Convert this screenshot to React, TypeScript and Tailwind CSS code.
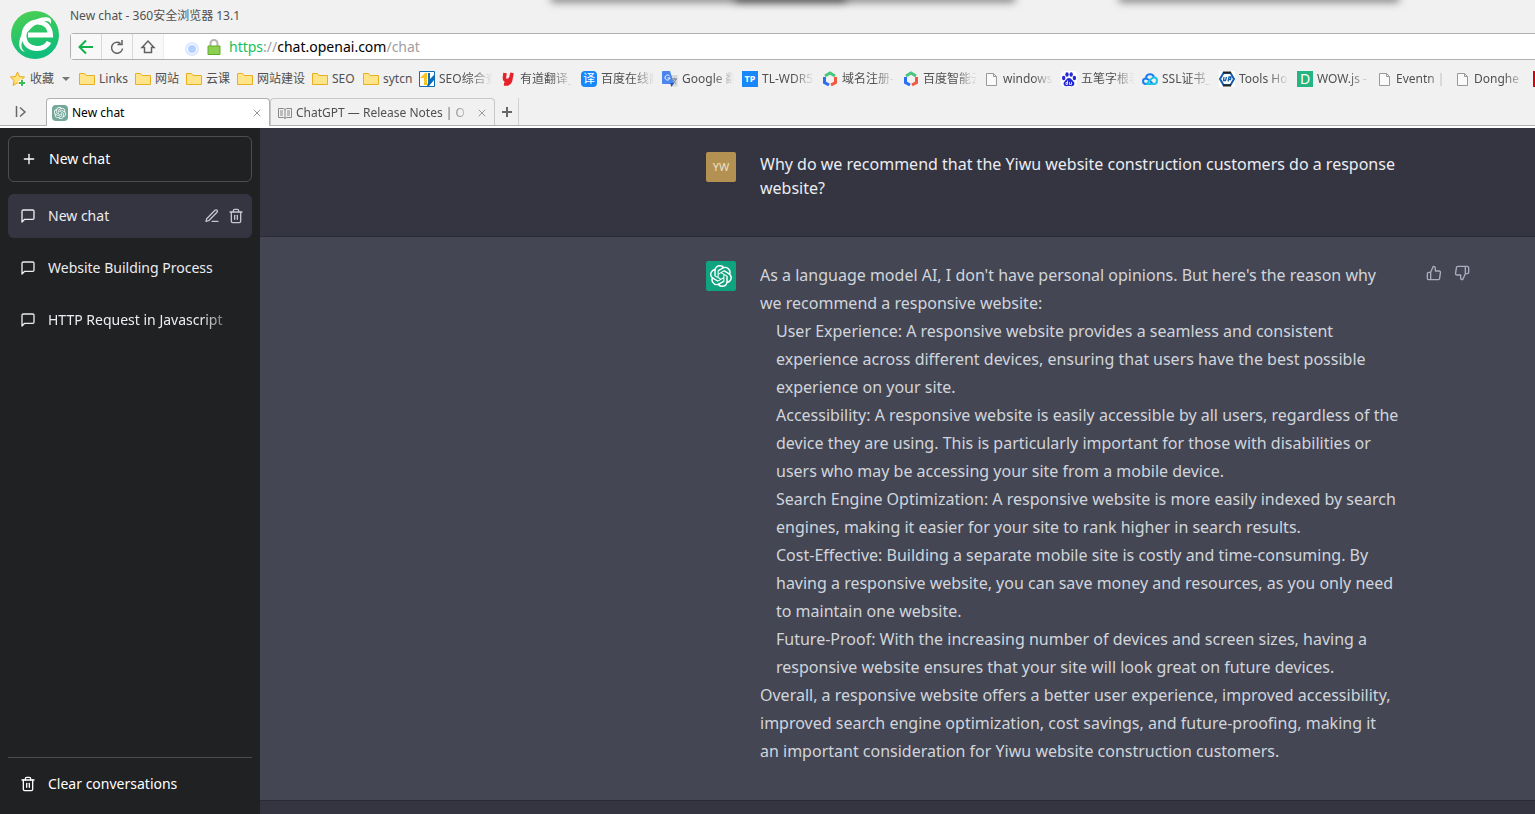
import { FC, ReactNode } from "react";
import {
  FiEdit3,
  FiMessageSquare,
  FiPlus,
  FiThumbsDown,
  FiThumbsUp,
  FiTrash2,
  FiX,
} from "react-icons/fi";
import { SiOpenai } from "react-icons/si";

const BrowserLogo: FC = () => (
  <svg viewBox="0 0 48 48" className="h-12 w-12">
    <defs>
      <linearGradient id="logoGreen" x1="0" y1="0" x2="0.3" y2="1">
        <stop offset="0" stopColor="#4fd04f" />
        <stop offset="1" stopColor="#0fbd7c" />
      </linearGradient>
    </defs>
    <circle cx="24" cy="24" r="24" fill="url(#logoGreen)" />
    <path
      d="M17 24h22.500C39 16 34 11 26.500 11 18.500 11 13 17 13 25c0 7.500 5.500 12.500 13 12.500 6 0 10-2.500 12-6.500"
      fill="none"
      stroke="#fff"
      strokeWidth="5"
    />
    <path d="M13 27c-4 6-3 11 1 14-6-1-8-9-3-18C16 13 27 5 37 6.500c3 .5 4 3.500 2.500 6.500C39 10.500 37 9.500 34 10 26 11 17 18 13 27z" fill="#fff" />
  </svg>
);

const FolderIcon: FC = () => (
  <svg viewBox="0 0 16 16" className="h-4 w-4">
    <path d="M.5 13.500v-11h5l1.500 2h8.500v9z" fill="#ffe48a" stroke="#e8b021" />
  </svg>
);

const PageIcon: FC = () => (
  <svg viewBox="0 0 14 16" className="h-4 w-[14px]">
    <path d="M1.500 2.500h7l3 3v9h-10zM8.500 2.500v3h3" fill="#fafafa" stroke="#999" />
  </svg>
);

const StarIcon: FC = () => (
  <svg viewBox="0 0 16 16" className="h-4 w-4">
    <path d="M7.500 1l2 4.500 5 .5-3.700 3.400 1 5-4.300-2.600-4.400 2.600 1-5L.5 6l5-.5z" fill="#ffe27a" stroke="#e8a91c" />
    <path d="M12 8.500v7M8.500 12h7" stroke="#fff" strokeWidth="4" />
    <path d="M12 9v6M9 12h6" stroke="#3dbb57" strokeWidth="2" />
  </svg>
);

const SeoIcon: FC = () => (
  <svg viewBox="0 0 16 16" className="h-4 w-4">
    <path d="M.5.5h15v15H.5z" fill="#fff" stroke="#0b6cb8" />
    <path d="M1 7l5-5h2v6l-3 3V7z" fill="#f7c51e" />
    <path d="M5 11l3-3v6H5z" fill="#f7c51e" />
    <path d="M9 2h2v6l4-4v5l-5 6H8l1-3z" fill="#0b6cb8" />
  </svg>
);

const YoudaoIcon: FC = () => (
  <svg viewBox="0 0 16 16" className="h-4 w-4">
    <path d="M5 2L4.500 6Q4 9.500 7 9.500T11 6l1-4-1.500 8q-1 3.500-6.500 3" fill="none" stroke="#e62129" strokeWidth="3.500" />
  </svg>
);

const GoogleTranslateIcon: FC = () => (
  <svg viewBox="0 0 16 16" className="h-4 w-4">
    <path d="M6 4h9.500v11.500H9z" fill="#d5d8dc" />
    <path d="M1 0h7l4 13H1q-1 0-1-1V1q0-1 1-1z" fill="#4a86ee" />
    <path d="M8 12h4l-2.500 4z" fill="#2f56b0" />
    <path d="M7.500 5A2.500 2.500 0 1 0 8 7H5.500" fill="none" stroke="#fff" />
    <path d="M10 8h5M12.500 7v1M14 8q-1 3-3 4M11 9q1 2 3 3.500" fill="none" stroke="#6f7f95" />
  </svg>
);

const CloudHexIcon: FC = () => (
  <svg viewBox="0 0 16 16" className="h-4 w-4">
    <path d="M3 5l5-3 5 3" fill="none" stroke="#4cc57c" strokeWidth="3" />
    <path d="M2.500 6v5.500L7 14" fill="none" stroke="#2d6df6" strokeWidth="3" />
    <path d="M13.500 6v5.500L9 14" fill="none" stroke="#f2593f" strokeWidth="3" />
  </svg>
);

const PawIcon: FC = () => (
  <svg viewBox="0 0 16 16" className="h-4 w-4 rounded-sm bg-white">
    <g fill="#2529d8">
      <ellipse cx="2.700" cy="7" rx="1.700" ry="2.200" />
      <ellipse cx="6" cy="3.500" rx="1.700" ry="2.300" />
      <ellipse cx="10.200" cy="3.500" rx="1.700" ry="2.300" />
      <ellipse cx="13.400" cy="7" rx="1.700" ry="2.200" />
      <path d="M8 7c2 0 3 2 4.500 3.500 2 2 .5 5-2 4.700-1.500-.4-3.500-.4-5 0-2.500.3-4-2.700-2-4.700C5 9 6 7 8 7z" />
    </g>
    <path d="M6.500 9.500v4H5v-2h1.500M8.500 11v2.500h2V11" fill="none" stroke="#fff" strokeWidth="0.800" />
  </svg>
);

const SslCloudIcon: FC = () => (
  <svg viewBox="0 0 16 16" className="h-4 w-4" fill="none" strokeWidth="2">
    <path d="M4 13c-4 0-4-5.500 0-5.500C4 2 11 2 12 6.500" stroke="#1c7cf2" />
    <path d="M4 7.500c2 0 4 2.500 6.500 5" stroke="#1c7cf2" />
    <path d="M4 13h8c4 0 4-6.500 0-6.500-2.500 0-4 3-7 6" stroke="#1fc3e8" />
  </svg>
);

const ToolsIcon: FC = () => (
  <svg viewBox="0 0 16 16" className="h-4 w-4 bg-white">
    <path d="M4.500 2h7L15 8l-3.500 6h-7L1 8z" fill="none" stroke="#155eae" strokeWidth="2" />
    <path d="M4 1.500h8M4 14.500h8" stroke="#222" strokeWidth="2" />
    <path d="M5 6l-.5 3.500h2L7.500 6M9 10.500L10 6h2l-.5 2.500h-2" fill="none" stroke="#155eae" strokeWidth="1.300" />
  </svg>
);

const Badge: FC<{ className: string; children: ReactNode }> = ({ className, children }) => (
  <span className={`flex h-4 w-4 items-center justify-center leading-4 text-white ${className}`}>
    {children}
  </span>
);

const bookmarks = [
  { label: "Links", icon: <FolderIcon />, width: "w-[56px]" },
  { label: "网站", icon: <FolderIcon />, width: "w-[51px]" },
  { label: "云课", icon: <FolderIcon />, width: "w-[51px]" },
  { label: "网站建设", icon: <FolderIcon />, width: "w-[75px]" },
  { label: "SEO", icon: <FolderIcon />, width: "w-[51px]" },
  { label: "sytcn", icon: <FolderIcon />, width: "w-[56px]" },
  { label: "SEO综合查", icon: <SeoIcon />, width: "w-[81px]", fade: true },
  { label: "有道翻译_", icon: <YoudaoIcon />, width: "w-[81px]", fade: true },
  {
    label: "百度在线翻",
    icon: <Badge className="rounded-sm bg-[#1787fb] text-xs">译</Badge>,
    width: "w-[81px]",
    fade: true,
  },
  { label: "Google 翻", icon: <GoogleTranslateIcon />, width: "w-[80px]", fade: true },
  {
    label: "TL-WDR5",
    icon: <Badge className="bg-[#1787fb] text-[9px] font-bold">TP</Badge>,
    width: "w-[80px]",
    fade: true,
  },
  { label: "域名注册-", icon: <CloudHexIcon />, width: "w-[81px]", fade: true },
  { label: "百度智能云", icon: <CloudHexIcon />, width: "w-[82px]", fade: true },
  { label: "windows", icon: <PageIcon />, width: "w-[76px]", fade: true },
  { label: "五笔字根表", icon: <PawIcon />, width: "w-[81px]", fade: true },
  { label: "SSL证书_", icon: <SslCloudIcon />, width: "w-[77px]", fade: true },
  { label: "Tools Ho", icon: <ToolsIcon />, width: "w-[78px]", fade: true },
  {
    label: "WOW.js -",
    icon: <Badge className="bg-[#25b580] text-sm">D</Badge>,
    width: "w-[81px]",
    fade: true,
  },
  { label: "Eventn |", icon: <PageIcon />, width: "w-[78px]", fade: true },
  { label: "Donghe |", icon: <PageIcon />, width: "w-[77px]", fade: true },
];

const chats = ["New chat", "Website Building Process", "HTTP Request in Javascript"];

const reasons = [
  "User Experience: A responsive website provides a seamless and consistent experience across different devices, ensuring that users have the best possible experience on your site.",
  "Accessibility: A responsive website is easily accessible by all users, regardless of the device they are using. This is particularly important for those with disabilities or users who may be accessing your site from a mobile device.",
  "Search Engine Optimization: A responsive website is more easily indexed by search engines, making it easier for your site to rank higher in search results.",
  "Cost-Effective: Building a separate mobile site is costly and time-consuming. By having a responsive website, you can save money and resources, as you only need to maintain one website.",
  "Future-Proof: With the increasing number of devices and screen sizes, having a responsive website ensures that your site will look great on future devices.",
];

const BrowserChrome: FC = () => (
  <header className="relative overflow-hidden bg-[#f1f1f1] text-xs text-[#505050]">
    {/* Shadows of the windows above */}
    <div className="absolute -top-1 left-[36%] h-1 w-[30%] shadow-[0_0_8px_2px_rgba(0,0,0,0.5)]" />
    <div className="absolute -top-1 left-[48%] h-1 w-[7%] shadow-[0_0_8px_2px_rgba(0,0,0,0.5)]" />
    <div className="absolute -top-1 left-[73%] h-1 w-[18%] shadow-[0_0_8px_2px_rgba(0,0,0,0.5)]" />

    {/* Title and address bar */}
    <div className="flex">
      <div className="px-[11px] pt-[11px]">
        <BrowserLogo />
      </div>
      <div className="min-w-0 flex-1">
        <div className="h-[33px] leading-8">New chat - 360安全浏览器 13.1</div>
        <div className="flex h-[27px] rounded-l-sm border border-r-0 border-[#b0b0b0] bg-white">
          <button aria-label="Back" className="flex w-[31px] items-center justify-center border-r border-[#d8d8d8] bg-[#f8f8f8]">
            <svg viewBox="0 0 16 16" className="h-4 w-4" fill="none" stroke="#12b24b" strokeWidth="2">
              <path d="M8 1.500L1.500 8 8 14.500M1.500 8H15" />
            </svg>
          </button>
          <button aria-label="Reload" className="flex w-[31px] items-center justify-center border-r border-[#d8d8d8] bg-[#f8f8f8]">
            <svg viewBox="0 0 16 16" className="h-4 w-4" fill="none" stroke="#606060" strokeWidth="1.500">
              <path d="M13.500 9.500A5.500 5.500 0 1 1 11.500 4.500M8.500 5.500h4.500V1" />
            </svg>
          </button>
          <button aria-label="Home" className="flex w-[31px] items-center justify-center border-r border-[#ececec] bg-[#f8f8f8]">
            <svg viewBox="0 0 16 16" className="h-4 w-4" fill="none" stroke="#606060" strokeWidth="1.500">
              <path d="M4.500 13.500V8.500H2L8 2l6 6.500h-2.500v5z" />
            </svg>
          </button>
          <div className="flex min-w-0 flex-1 items-center gap-2 pl-[21px]">
            <span className="mt-1 h-[14px] w-[14px] rounded-full border-2 border-[#dce8ff] bg-[#b5d0ff] bg-clip-content p-px" />
            <svg viewBox="0 0 14 16" className="h-4 w-[14px]">
              <path d="M3.500 8V4.500a3.500 3.500 0 0 1 7 0V8" fill="none" stroke="#b5b5b5" strokeWidth="2" />
              <path d="M1 7h12v8.500H1z" fill="#8ccf52" stroke="#5fae2a" />
            </svg>
            <div
              role="textbox"
              aria-label="Address"
              contentEditable
              suppressContentEditableWarning
              className="flex-1 text-sm leading-6 text-[#a0a0a0] outline-none"
            >
              <span className="text-[#12c25b]">https</span>://<span className="text-black">chat.openai.com</span>/chat
            </div>
          </div>
        </div>
      </div>
    </div>

    {/* Bookmarks */}
    <nav className="flex h-[38px] items-center overflow-hidden pl-[10px]">
      <button className="flex w-[69px] shrink-0 items-center gap-1 whitespace-nowrap">
        <StarIcon />
        收藏
        <span className="ml-1 border-x-4 border-t-4 border-x-transparent border-t-[#777]" />
      </button>
      {bookmarks.map((b) => (
        <a
          key={b.label}
          href="#"
          className={`flex shrink-0 items-center gap-1 pr-2 ${b.width}`}
        >
          <span className="shrink-0">{b.icon}</span>
          <span
            className={`flex-1 whitespace-nowrap ${
              b.fade
                ? "overflow-hidden [mask-image:linear-gradient(to_right,black_60%,transparent)]"
                : ""
            }`}
          >
            {b.label}
          </span>
        </a>
      ))}
      <span className="h-4 w-4 shrink-0 bg-[#d8000f]" />
    </nav>

    {/* Tabs */}
    <div className="flex h-7 border-b border-[#b0b0b0]">
      <button aria-label="Toggle tabs" className="flex w-[46px] shrink-0 items-center pl-[15px]">
        <svg viewBox="0 0 12 12" className="h-3 w-3" fill="none" stroke="#666" strokeWidth="1.500">
          <path d="M1.500 0v11M5 1.500l5 4.500-5 4.500" />
        </svg>
      </button>
      <div className="-mb-px flex w-[224px] items-center gap-1 rounded-t-sm border border-b-0 border-[#b0b0b0] bg-white pt-px pr-[6px] pl-[5px] text-black">
        <span className="flex h-4 w-4 items-center justify-center rounded-sm bg-[#74a89b]">
          <SiOpenai className="h-3 w-3 text-white" />
        </span>
        <span className="flex-1">New chat</span>
        <button aria-label="Close tab" className="text-[#999]">
          <FiX size={12} />
        </button>
      </div>
      <div className="flex w-[225px] items-center gap-1 rounded-t-sm border border-b-0 border-[#c8c8c8] pt-px pr-[6px] pl-[7px]">
        <svg viewBox="0 0 14 12" className="h-3 w-[14px]" fill="none" stroke="#888">
          <path d="M7 2v9.500M.5 1.500h5L7 2.500l1.500-1h5v9h-5l-1.500 1-1.500-1h-5zM2 4h3M2 6h3M2 8h3M9 4h3M9 6h3M9 8h3" />
        </svg>
        <span className="flex-1 overflow-hidden whitespace-nowrap [mask-image:linear-gradient(to_right,black_85%,transparent)]">
          ChatGPT — Release Notes | O
        </span>
        <button aria-label="Close tab" className="text-[#999]">
          <FiX size={12} />
        </button>
      </div>
      <button aria-label="New tab" className="flex w-6 items-center justify-center border-r border-[#d0d0d0]">
        <svg viewBox="0 0 12 12" className="h-3 w-3" stroke="#666" strokeWidth="2">
          <path d="M6 1v10M1 6h10" />
        </svg>
      </button>
    </div>
    <div className="h-[2px] bg-white" />
  </header>
);

const Sidebar: FC = () => (
  <aside className="flex w-[260px] shrink-0 flex-col bg-[#202123] p-2 text-sm leading-5 text-white">
    <button className="mb-3 flex h-[46px] items-center gap-3 rounded-md border border-white/20 px-3">
      <FiPlus size={16} />
      New chat
    </button>
    <nav className="flex flex-1 flex-col gap-2">
      {chats.map((chat, i) => (
        <div
          key={chat}
          className={`flex h-11 items-center gap-3 rounded-md px-3 text-[#ececf1] ${
            i === 0 ? "bg-[#343541]" : ""
          }`}
        >
          <FiMessageSquare size={16} className="shrink-0" />
          <a
            href="#"
            className={`flex-1 overflow-hidden whitespace-nowrap ${
              i === 2 ? "[mask-image:linear-gradient(to_right,black_80%,transparent)]" : ""
            }`}
          >
            {chat}
          </a>
          {i === 0 && (
            <div className="-mr-1 flex gap-2 text-[#c5c5d2]">
              <button aria-label="Rename chat">
                <FiEdit3 size={16} />
              </button>
              <button aria-label="Delete chat">
                <FiTrash2 size={16} />
              </button>
            </div>
          )}
        </div>
      ))}
    </nav>
    <div className="border-t border-white/20 pt-1">
      <button className="flex h-11 w-full items-center gap-3 px-3">
        <FiTrash2 size={16} />
        Clear conversations
      </button>
    </div>
  </aside>
);

const App: FC = () => {
  return (
    <div className="flex min-h-screen flex-col font-['Noto_Sans','Noto_Sans_CJK_SC',sans-serif]">
      <BrowserChrome />
      <div className="flex flex-1">
        <Sidebar />
        <main className="min-w-0 flex-1 bg-[#343541] text-base">
          {/* Question */}
          <section className="flex justify-end border-b border-[#2a2b32] py-6 pr-[61px]">
            <div className="flex w-full max-w-3xl gap-6">
              <div className="flex h-[30px] w-[30px] shrink-0 items-center justify-center rounded-xs bg-[#b39152] text-[11px] text-[#ebe0cc]">
                YW
              </div>
              <p className="min-h-[60px] max-w-[652px] flex-1 leading-6 text-[#ececf1]">
                Why do we recommend that the Yiwu website construction customers do a response
                website?
              </p>
            </div>
          </section>

          {/* Answer */}
          <section className="flex justify-end border-b border-[#2a2b32] bg-[#444654] pt-6 pb-[35px] pr-[61px]">
            <div className="flex w-full max-w-3xl">
              <div className="flex h-[30px] w-[30px] shrink-0 items-center justify-center rounded-xs bg-[#10a37f]">
                <SiOpenai className="h-[22px] w-[22px] text-white" />
              </div>
              <div className="ml-6 max-w-[652px] flex-1 leading-7 text-[#d1d5db]">
                <p className="pr-4">
                  As a language model AI, I don't have personal opinions. But here's the reason why
                  we recommend a responsive website:
                </p>
                <ol className="pr-2 pl-4">
                  {reasons.map((reason) => (
                    <li key={reason}>{reason}</li>
                  ))}
                </ol>
                <p className="pr-4">
                  Overall, a responsive website offers a better user experience, improved
                  accessibility, improved search engine optimization, cost savings, and
                  future-proofing, making it an important consideration for Yiwu website
                  construction customers.
                </p>
              </div>
              <div className="ml-auto flex gap-1 self-start text-[#acacbe]">
                <button aria-label="Good answer" className="p-1">
                  <FiThumbsUp size={16} />
                </button>
                <button aria-label="Bad answer" className="p-1">
                  <FiThumbsDown size={16} />
                </button>
              </div>
            </div>
          </section>
        </main>
      </div>
    </div>
  );
};

export default App;
